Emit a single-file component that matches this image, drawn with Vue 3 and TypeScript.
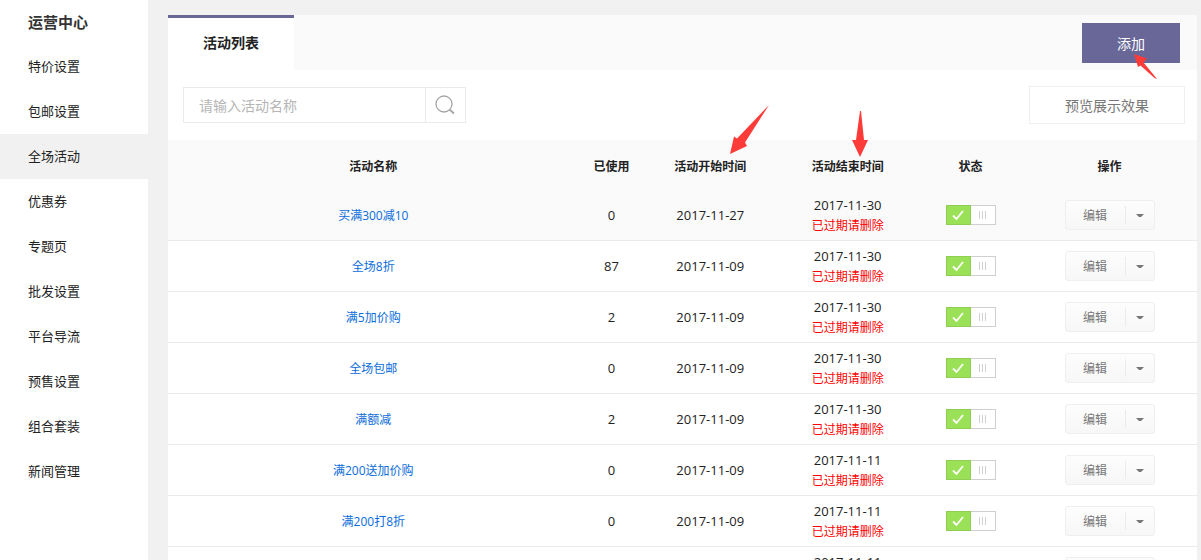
<script setup lang="ts">
import { ref } from 'vue'

interface Activity {
  name: string
  used: string
  start: string
  end: string
  enabled: boolean
}

const menu: string[] = [
  '特价设置', '包邮设置', '全场活动', '优惠券', '专题页',
  '批发设置', '平台导流', '预售设置', '组合套装', '新闻管理',
]
const current = ref('全场活动')
const keyword = ref('')

const activities = ref<Activity[]>([
  { name: '买满300减10', used: '0', start: '2017-11-27', end: '2017-11-30', enabled: true },
  { name: '全场8折', used: '87', start: '2017-11-09', end: '2017-11-30', enabled: true },
  { name: '满5加价购', used: '2', start: '2017-11-09', end: '2017-11-30', enabled: true },
  { name: '全场包邮', used: '0', start: '2017-11-09', end: '2017-11-30', enabled: true },
  { name: '满额减', used: '2', start: '2017-11-09', end: '2017-11-30', enabled: true },
  { name: '满200送加价购', used: '0', start: '2017-11-09', end: '2017-11-11', enabled: true },
  { name: '满200打8折', used: '0', start: '2017-11-09', end: '2017-11-11', enabled: true },
  { name: '', used: '', start: '', end: '2017-11-11', enabled: true },
])
</script>

<template>
  <div class="page">
    <nav class="sidebar">
      <h2 class="sidebar-title">运营中心</h2>
      <a
        v-for="item in menu"
        :key="item"
        href="#"
        class="menu-item"
        :class="{ active: item === current }"
        @click.prevent="current = item"
      >{{ item }}</a>
    </nav>

    <main class="main">
      <header class="tabs">
        <button type="button" class="tab">活动列表</button>
        <div class="add-wrap">
          <button type="button" class="add">添加</button>
          <svg class="arrow arrow-add" width="24" height="26" viewBox="0 0 24 26" aria-hidden="true">
            <path d="M0 0L13 4.500L9.500 8.500L23 25L20.500 24L6.500 11.500L4 13Z" fill="#fd3b38" />
          </svg>
        </div>
      </header>

      <div class="toolbar">
        <form class="search" @submit.prevent>
          <input v-model="keyword" class="search-input" type="text" placeholder="请输入活动名称" aria-label="活动名称" />
          <button type="submit" class="search-btn" aria-label="搜索">
            <svg width="20" height="20" viewBox="0 0 20 20" fill="none" stroke="#a6a6a6" stroke-width="1.3">
              <circle cx="9" cy="9" r="8" />
              <path d="M14.500 14.500L19 18.500" stroke-width="1.8" />
            </svg>
          </button>
        </form>
        <button type="button" class="preview">预览展示效果</button>
      </div>

      <table class="list">
        <colgroup>
          <col class="c-name" /><col class="c-used" /><col class="c-start" />
          <col class="c-end" /><col class="c-status" /><col class="c-action" />
        </colgroup>
        <thead>
          <tr>
            <th>活动名称</th>
            <th>已使用</th>
            <th>
              <span class="marked">活动开始时间
                <svg class="arrow arrow-start" width="40" height="50" viewBox="0 0 40 50" aria-hidden="true">
                  <path d="M39 0L15 37.500L17 41L0 49L4 31.500L7 33.500Z" fill="#fd3b38" />
                </svg>
              </span>
            </th>
            <th>
              <span class="marked">活动结束时间
                <svg class="arrow arrow-end" width="16" height="46" viewBox="0 0 16 46" aria-hidden="true">
                  <path d="M8 0H9L12 29H16L8 46L0 29H4Z" fill="#fd3b38" />
                </svg>
              </span>
            </th>
            <th>状态</th>
            <th>操作</th>
          </tr>
        </thead>
        <tbody>
          <tr v-for="(row, i) in activities" :key="i" :class="{ hovered: i === 0 }">
            <td><a href="#" class="name" @click.prevent>{{ row.name }}</a></td>
            <td class="num">{{ row.used }}</td>
            <td class="num">{{ row.start }}</td>
            <td>
              <div class="num end">{{ row.end }}</div>
              <div class="expired">已过期请删除</div>
            </td>
            <td>
              <label class="toggle">
                <input v-model="row.enabled" type="checkbox" aria-label="状态" />
                <span class="on">
                  <svg width="12" height="12" viewBox="0 0 12 12" fill="none" stroke="#fff" stroke-width="1.8">
                    <path d="M1 6.500L4.500 10L11 2" />
                  </svg>
                </span>
                <span class="off">
                  <svg width="9" height="8" viewBox="0 0 9 8" stroke="#d0d0d0">
                    <path d="M1.500 0V8M4.500 0V8M7.500 0V8" />
                  </svg>
                </span>
              </label>
            </td>
            <td>
              <div class="actions">
                <button type="button" class="edit">编辑</button>
                <button type="button" class="more" aria-label="更多操作">
                  <svg width="8" height="4" viewBox="0 0 8 4"><path d="M0 0H8L5 3H3Z" fill="#777" /></svg>
                </button>
              </div>
            </td>
          </tr>
        </tbody>
      </table>
    </main>
  </div>
</template>

<style>
body {
  margin: 0;
  background: #f1f1f1;
}
</style>

<style scoped>
.page,
.page * {
  box-sizing: border-box;
}
.page {
  display: flex;
  gap: 20px;
  height: 100vh;
  padding-right: 4px;
  overflow: hidden;
  background: #f1f1f1;
  color: #222;
  font-family: "Open Sans", "Noto Sans CJK SC", sans-serif;
  font-size: 12px;
  line-height: 20px;
}
button,
input {
  font-family: inherit;
  margin: 0;
  padding: 0;
  border: 0;
  border-radius: 0;
  background: none;
}
button {
  cursor: pointer;
}
svg {
  display: block;
}
.sidebar {
  flex: 0 0 148px;
  background: #fff;
}
.sidebar-title {
  margin: 0;
  padding-left: 28px;
  font-size: 15px;
  line-height: 44px;
  font-weight: 700;
  color: #333;
}
.menu-item {
  display: block;
  padding-left: 28px;
  font-size: 13px;
  line-height: 45px;
  color: #222;
  text-decoration: none;
}
.menu-item.active {
  background: #f1f1f1;
}
.main {
  flex: 1;
  min-width: 0;
  margin-top: 15px;
  background: #fff;
}
.tabs {
  display: flex;
  justify-content: space-between;
  height: 55px;
  background: #fafafa;
}
.tab {
  width: 126px;
  padding-bottom: 4px;
  border-top: 3px solid #686798;
  background: #fff;
  color: #222;
  font-size: 14px;
  font-weight: 700;
}
.add-wrap {
  position: relative;
  margin: 8px 17px 0 0;
}
.add {
  width: 98px;
  height: 40px;
  background: #686798;
  color: #fff;
  font-size: 14px;
}
.arrow {
  position: absolute;
  pointer-events: none;
}
.arrow-add {
  left: 52px;
  top: 31px;
}
.arrow-start {
  left: 56px;
  bottom: 22px;
}
.arrow-end {
  left: 40px;
  bottom: 20px;
}
.toolbar {
  display: flex;
  justify-content: space-between;
  align-items: center;
  height: 70px;
  padding: 0 12px 0 15px;
}
.search {
  display: flex;
  width: 283px;
  height: 36px;
  border: 1px solid #ebebeb;
}
.search-input {
  flex: 1;
  min-width: 0;
  padding-left: 15px;
  font-size: 14px;
  color: #333;
  outline: none;
}
.search-input::placeholder {
  color: #b5b5b5;
  opacity: 1;
}
.search-btn {
  display: flex;
  align-items: center;
  justify-content: center;
  width: 40px;
  padding-right: 2px;
  border-left: 1px solid #ebebeb;
}
.preview {
  width: 156px;
  height: 38px;
  border: 1px solid #efefef;
  background: #fff;
  color: #777;
  font-size: 14px;
}
.list {
  width: 100%;
  table-layout: fixed;
  border-collapse: separate;
  border-spacing: 0;
  text-align: center;
}
.c-name { width: 39.9%; }
.c-used { width: 6.4%; }
.c-start { width: 12.8%; }
.c-end { width: 13.9%; }
.c-status { width: 10%; }
.c-action { width: 17%; }
th {
  height: 50px;
  padding: 3px 0 0;
  background: #fafafa;
  font-weight: 700;
}
td {
  height: 51px;
  padding: 0;
  border-bottom: 1px solid #ebebeb;
}
.hovered td {
  background: #fafafa;
}
.marked {
  display: inline-block;
  position: relative;
}
.name {
  display: block;
  padding-top: 2px;
  color: #0a6cdb;
  text-decoration: none;
}
.num {
  font-size: 13px;
}
.end,
.expired {
  padding-top: 1px;
}
.expired {
  color: #f00;
}
.toggle {
  display: inline-flex;
  position: relative;
  width: 50px;
  height: 20px;
  vertical-align: middle;
  cursor: pointer;
}
.toggle input {
  position: absolute;
  inset: 0;
  width: 100%;
  height: 100%;
  opacity: 0;
}
.on,
.off {
  display: flex;
  align-items: center;
  justify-content: center;
}
.on {
  width: 25px;
  border: 1px solid #8fce52;
  background: #9be158;
}
.off {
  flex: 1;
  border: 1px solid #cfcfcf;
  border-left: 0;
  background: #fff;
}
.actions {
  display: inline-flex;
  align-items: center;
  width: 90px;
  height: 30px;
  border: 1px solid #efefef;
  border-radius: 3px;
  background: linear-gradient(#fdfdfd, #f7f7f7);
  vertical-align: middle;
}
.edit {
  flex: 1;
  height: 18px;
  padding-top: 2px;
  border-right: 1px solid #ebebeb;
  color: #777;
  font-size: 12px;
  line-height: 16px;
}
.more {
  display: flex;
  align-items: center;
  justify-content: center;
  width: 28px;
  height: 28px;
  padding-top: 2px;
}
</style>
